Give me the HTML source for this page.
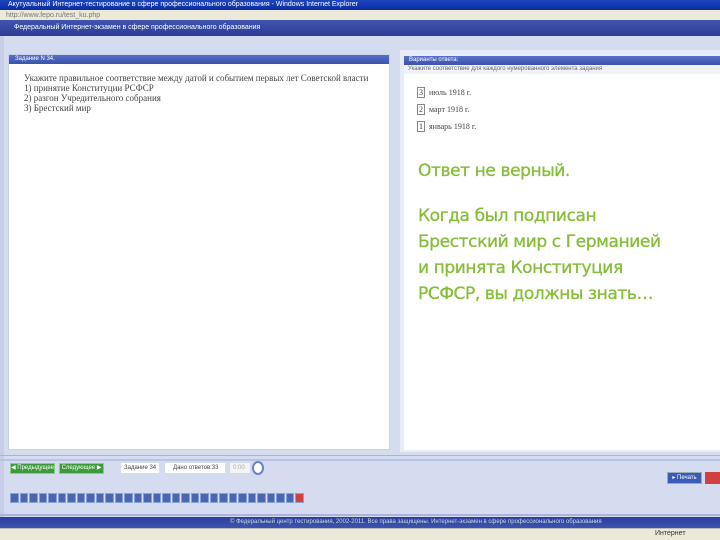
<!DOCTYPE html>
<html><head><meta charset="utf-8"><style>
*{margin:0;padding:0;box-sizing:border-box}
body{width:720px;height:540px;overflow:hidden;background:#d6dcf0;font-family:"Liberation Sans","DejaVu Sans",sans-serif;position:relative}
.a{position:absolute}
.t{font-size:8px;color:#fff;white-space:nowrap;overflow:hidden}
.s{font-family:"Liberation Serif",serif;font-size:9px;color:#444;line-height:10px}
.g{font-family:"DejaVu Sans",sans-serif;color:#84bd36;font-size:17px;line-height:26px;letter-spacing:-0.4px;-webkit-text-stroke:0.3px #84bd36}
.n{display:inline-block;width:8.5px;height:10px;background:#4a66b0;margin-right:1px;border:1px solid #8aa0d8}
.b{font-size:6px;color:#fff;line-height:9px;text-align:center}
</style></head><body>
<div class="a" style="left:0;top:0;width:720px;height:10px;background:linear-gradient(#1e45c0,#0a2c9e)"><div class="t" style="padding-left:8px;font-size:7px;line-height:10px">Акутуальный Интернет-тестирование в сфере профессионального образования - Windows Internet Explorer</div></div>
<div class="a" style="left:0;top:10px;width:720px;height:10px;background:#ece9d8"><div class="a" style="left:6px;top:2px;font-size:7px;color:#777">http://www.fepo.ru/test_ku.php</div></div>
<div class="a" style="left:0;top:20px;width:720px;height:16px;background:linear-gradient(#3f55b0,#2b3c95)"><div class="t" style="padding-left:14px;line-height:16px;font-size:7px">Федеральный Интернет-экзамен в сфере профессионального образования</div></div>
<div class="a" style="left:0;top:36px;width:4px;height:482px;background:#c8cee8"></div>

<div class="a" style="left:8px;top:54px;width:382px;height:396px;background:#fff;border:1px solid #c8d0ea"></div>
<div class="a" style="left:9px;top:55px;width:380px;height:9px;background:linear-gradient(#5a70c8,#3a52aa)"><div class="t" style="padding-left:6px;font-size:6px;line-height:9px">Задание N 34.</div></div>
<div class="a s" style="left:24px;top:73px">Укажите правильное соответствие между датой и событием первых лет Советской власти<br>1) принятие Конституции РСФСР<br>2) разгон Учредительного собрания<br>3) Брестский мир</div>

<div class="a" style="left:400px;top:50px;width:320px;height:402px;background:#e8ecf8"></div>
<div class="a" style="left:404px;top:56px;width:316px;height:394px;background:#fff"></div>
<div class="a" style="left:404px;top:56px;width:316px;height:9px;background:linear-gradient(#5a70c8,#3a52aa)"><div class="t" style="padding-left:5px;font-size:6px;line-height:9px">Варианты ответа:</div></div>
<div class="a" style="left:404px;top:65px;width:316px;height:9px;background:#f0f2f8;font-size:6px;color:#667;padding-left:4px;line-height:9px;white-space:nowrap">Укажите соответствие для каждого нумерованного элемента задания</div>
<div class="a s" style="left:417px;top:84px;line-height:17px;font-size:8px">
<span style="border:1px solid #888;padding:0 1px">3</span>&nbsp; июль 1918 г.<br>
<span style="border:1px solid #888;padding:0 1px">2</span>&nbsp; март 1918 г.<br>
<span style="border:1px solid #888;padding:0 1px">1</span>&nbsp; январь 1918 г.</div>
<div class="a g" style="left:418px;top:158px">Ответ не верный.</div>
<div class="a g" style="left:418px;top:203px">Когда был подписан<br>Брестский мир с Германией<br>и принята Конституция<br>РСФСР, вы должны знать…</div>

<div class="a" style="left:0;top:455px;width:720px;height:1px;background:#a8b4dc"></div>
<div class="a" style="left:0;top:459px;width:720px;height:2px;background:#b8c4e6"></div>
<div class="a b" style="left:10px;top:463px;width:45px;height:11px;background:#3c9a3c;border:1px solid #8c8">◀ Предыдущее</div>
<div class="a b" style="left:59px;top:463px;width:45px;height:11px;background:#3c9a3c;border:1px solid #8c8">Следующее ▶</div>
<div class="a" style="left:121px;top:463px;width:38px;height:10px;background:#fff;font-size:6px;color:#444;line-height:10px;padding-left:3px">Задание 34</div>
<div class="a" style="left:165px;top:463px;width:60px;height:10px;background:#fff;font-size:6px;color:#444;line-height:10px;padding-left:8px">Дано ответов:33</div>
<div class="a" style="left:230px;top:463px;width:20px;height:10px;background:#f4f4f4;font-size:6px;color:#aaa;line-height:10px;padding-left:3px">0:00</div>
<div class="a" style="left:252px;top:461px;width:12px;height:14px;border:2px solid #6a82c8;border-radius:50%;background:#fff"></div>
<div class="a b" style="left:667px;top:472px;width:35px;height:12px;background:#3a5ab8;border:1px solid #9ab;line-height:10px">▸ Печать</div>
<div class="a" style="left:705px;top:472px;width:15px;height:12px;background:#d04040"></div>
<div class="a" style="left:10px;top:493px;white-space:nowrap;line-height:0"><span class="n"></span><span class="n"></span><span class="n"></span><span class="n"></span><span class="n"></span><span class="n"></span><span class="n"></span><span class="n"></span><span class="n"></span><span class="n"></span><span class="n"></span><span class="n"></span><span class="n"></span><span class="n"></span><span class="n"></span><span class="n"></span><span class="n"></span><span class="n"></span><span class="n"></span><span class="n"></span><span class="n"></span><span class="n"></span><span class="n"></span><span class="n"></span><span class="n"></span><span class="n"></span><span class="n"></span><span class="n"></span><span class="n"></span><span class="n"></span><span class="n" style="background:#d04040"></span></div>
<div class="a" style="left:0;top:514px;width:720px;height:2px;background:#a8b4dc"></div>
<div class="a" style="left:0;top:517px;width:720px;height:11px;background:linear-gradient(#2c3e9a,#3e52b0)"><div class="t" style="padding-left:230px;font-size:6px;line-height:11px;color:#cdd">© Федеральный центр тестирования, 2002-2011. Все права защищены. Интернет-экзамен в сфере профессионального образования</div></div>
<div class="a" style="left:0;top:528px;width:720px;height:12px;background:#ece9d8;border-top:1px solid #bbb"></div>
<div class="a" style="left:655px;top:530px;font-size:7px;color:#333">Интернет</div>
</body></html>
